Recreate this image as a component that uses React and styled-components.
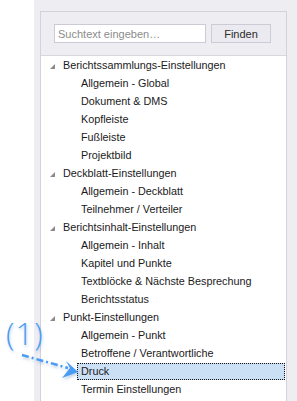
import styled, { createGlobalStyle } from 'styled-components';

const GlobalStyle = createGlobalStyle`
    html, body {
        margin: 0;
        padding: 0;
        background: #ffffff;
    }
    body {
        font-family: "Liberation Sans", Arial, sans-serif;
    }
`;

const StyledPage = styled.div`
    display: flex;
    width: 297px;
    height: 401px;
    overflow: hidden;
    position: relative;
`;
const StyledGap = styled.div`
    width: 34px;
    flex-shrink: 0;
    background: #ffffff;
`;
const StyledSide = styled.div`
    flex: 1;
    background: #eeedf2;
    padding: 11px 10px 0 6px;
`;
const StyledPanel = styled.div`
    border: 1px solid #d3d2dc;
    border-bottom: none;
    height: 100%;
    display: flex;
    flex-direction: column;
`;
const StyledSearchBar = styled.div`
    display: flex;
    gap: 5px;
    padding: 12px 0 12px 13px;
    border-bottom: 1px solid #d8d7e0;
`;
const StyledInput = styled.input`
    box-sizing: border-box;
    width: 152px;
    height: 19px;
    border: 1px solid #cbcad5;
    background: #ffffff;
    padding: 0 3px;
    font-family: "Liberation Sans", sans-serif;
    font-size: 11px;
    outline: none;

    &::placeholder {
        color: #8c8c8c;
    }
`;
const StyledButton = styled.button`
    box-sizing: border-box;
    width: 60px;
    height: 19px;
    border: 1px solid #cdccd6;
    background: #ebeaf0;
    color: #2b2b2b;
    font-family: "Liberation Sans", sans-serif;
    font-size: 11px;
    padding: 0;
`;
const StyledTree = styled.div`
    flex: 1;
    background: #ffffff;
`;
const StyledRow = styled.div`
    box-sizing: border-box;
    height: 18px;
    display: flex;
    align-items: center;
    font-size: 10.8px;
    color: #1a1a1a;
    white-space: nowrap;
    padding-left: ${({ $child }) => ($child ? '40px' : '8px')};
    margin-right: 1px;
`;
const StyledSelected = styled.span`
    box-sizing: border-box;
    flex: 1;
    height: 17px;
    display: flex;
    align-items: center;
    margin-left: -4px;
    padding-left: 3px;
    background: #cbdff5;
    border: 1px dotted #111111;
`;
const StyledToggle = styled.span`
    width: 0;
    height: 0;
    border-left: 5px solid transparent;
    border-bottom: 5px solid #8a8a8a;
    margin: 2px 8px 0 1px;
`;
const StyledMarker = styled.div`
    position: absolute;
    left: 6px;
    top: 312px;
    color: #4a9cf2;
    font-family: "Open Sans", sans-serif;
    font-size: 31px;
    font-weight: 300;
    letter-spacing: 1px;
    text-shadow: 1px 2px 3px rgba(70, 120, 190, 0.3);
`;
const StyledArrow = styled.svg`
    position: absolute;
    left: 0;
    top: 340px;
`;

const tree = [
    { title: 'Berichtssammlungs-Einstellungen', items: ['Allgemein - Global', 'Dokument & DMS', 'Kopfleiste', 'Fußleiste', 'Projektbild'] },
    { title: 'Deckblatt-Einstellungen', items: ['Allgemein - Deckblatt', 'Teilnehmer / Verteiler'] },
    { title: 'Berichtsinhalt-Einstellungen', items: ['Allgemein - Inhalt', 'Kapitel und Punkte', 'Textblöcke & Nächste Besprechung', 'Berichtsstatus'] },
    { title: 'Punkt-Einstellungen', items: ['Allgemein - Punkt', 'Betroffene / Verantwortliche', 'Druck', 'Termin Einstellungen'] },
];

const App = () => {
    return (
        <>
            <GlobalStyle />
            <StyledPage>
                <StyledGap />
                <StyledSide>
                    <StyledPanel>
                        <StyledSearchBar>
                            <StyledInput placeholder="Suchtext eingeben…" />
                            <StyledButton type="button">Finden</StyledButton>
                        </StyledSearchBar>
                        <StyledTree>
                            {tree.map((group) => (
                                <div key={group.title}>
                                    <StyledRow>
                                        <StyledToggle />
                                        {group.title}
                                    </StyledRow>
                                    {group.items.map((item) => (
                                        <StyledRow $child key={item}>
                                            {item === 'Druck' ? <StyledSelected>{item}</StyledSelected> : item}
                                        </StyledRow>
                                    ))}
                                </div>
                            ))}
                        </StyledTree>
                    </StyledPanel>
                </StyledSide>
                <StyledMarker>(1)</StyledMarker>
                <StyledArrow width="90" height="45" viewBox="0 0 90 45">
                    <defs>
                        <filter id="sh" x="-20%" y="-50%" width="140%" height="200%">
                            <feDropShadow dx="1" dy="2" stdDeviation="1.5" floodColor="#4a78b8" floodOpacity="0.35" />
                        </filter>
                    </defs>
                    <g filter="url(#sh)">
                        <path d="M22 15 L68 28" stroke="#4a9cf2" strokeWidth="2.5" strokeDasharray="7 3 2 3" fill="none" />
                        <path d="M78 32 L66 21 L70 28 L62 38 Z" fill="#4a9cf2" />
                    </g>
                </StyledArrow>
            </StyledPage>
        </>
    );
};

export default App;
